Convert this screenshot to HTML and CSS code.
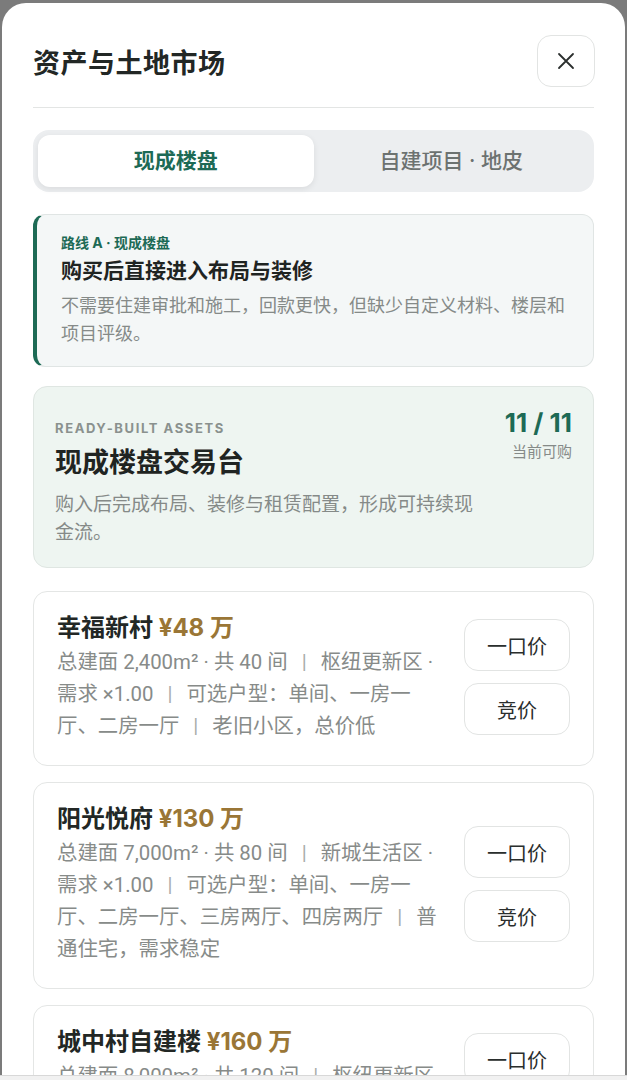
FILE: index.html
```html
<!DOCTYPE html>
<html lang="zh-CN">
<head>
  <meta charset="UTF-8">
  <title>资产与土地市场</title>
  <link rel="stylesheet" href="styles.css">
</head>
<body>

  <div class="sheet">
    <div class="header">
      <h1>资产与土地市场</h1>
      <button class="close" aria-label="关闭">
        <svg width="18" height="18" viewBox="0 0 18 18" fill="none" stroke="#2b2f2e" stroke-width="1.8" stroke-linecap="round">
          <path d="M2 2 L16 16 M16 2 L2 16"/>
        </svg>
      </button>
    </div>

    <div class="tabs">
      <div class="tab active">现成楼盘</div>
      <div class="tab">自建项目 · 地皮</div>
    </div>

    <div class="route">
      <div class="route-label">路线 A · 现成楼盘</div>
      <div class="route-title">购买后直接进入布局与装修</div>
      <p class="route-desc">不需要住建审批和施工，回款更快，但缺少自定义材料、楼层和项目评级。</p>
    </div>

    <div class="desk">
      <div class="desk-main">
        <div class="eyebrow">READY-BUILT ASSETS</div>
        <div class="desk-title">现成楼盘交易台</div>
        <p class="desk-desc">购入后完成布局、装修与租赁配置，形成可持续现金流。</p>
      </div>
      <div class="desk-count">
        <div class="count">11 / 11</div>
        <div class="count-label">当前可购</div>
      </div>
    </div>

    <div class="list">
      <div class="item">
        <div class="item-info">
          <div class="item-name">幸福新村 <span class="price">¥48 万</span></div>
          <p class="item-desc">总建面 2,400m² · 共 40 间<span class="sep">|</span>枢纽更新区 · 需求 ×1.00<span class="sep">|</span>可选户型：单间、一房一厅、二房一厅<span class="sep">|</span>老旧小区，总价低</p>
        </div>
        <div class="item-actions">
          <button class="btn">一口价</button>
          <button class="btn">竞价</button>
        </div>
      </div>

      <div class="item">
        <div class="item-info">
          <div class="item-name">阳光悦府 <span class="price">¥130 万</span></div>
          <p class="item-desc">总建面 7,000m² · 共 80 间<span class="sep">|</span>新城生活区 · 需求 ×1.00<span class="sep">|</span>可选户型：单间、一房一厅、二房一厅、三房两厅、四房两厅<span class="sep">|</span>普通住宅，需求稳定</p>
        </div>
        <div class="item-actions">
          <button class="btn">一口价</button>
          <button class="btn">竞价</button>
        </div>
      </div>

      <div class="item">
        <div class="item-info">
          <div class="item-name">城中村自建楼 <span class="price">¥160 万</span></div>
          <p class="item-desc">总建面 8,000m² · 共 120 间<span class="sep">|</span>枢纽更新区 · 需求 ×1.00<span class="sep">|</span>可选户型：单间、一房一厅<span class="sep">|</span>租金便宜，空置率低</p>
        </div>
        <div class="item-actions">
          <button class="btn">一口价</button>
          <button class="btn">竞价</button>
        </div>
      </div>
    </div>
  </div>

  <div class="bottom-bar"></div>

</body>
</html>
```

FILE: styles.css
```css
html, body {
  margin: 0;
  padding: 0;
  height: 100%;
  overflow: hidden;
}

body {
  background-color: #7b7b7b;
  font-family: Inter, "Noto Sans CJK SC", sans-serif;
  color: #1f2422;
}

.sheet {
  margin: 3px 2px 0;
  padding: 0 31px 40px;
  background-color: white;
  border-radius: 24px 24px 0 0;
  min-height: 1100px;
}

.header {
  display: flex;
  align-items: center;
  justify-content: space-between;
  padding-top: 32px;
  padding-bottom: 20px;
  border-bottom: 1px solid #e3e5e4;
}

h1 {
  margin: 0;
  font-size: 27px;
  font-weight: 700;
  letter-spacing: 0.5px;
  color: #222725;
}

.close {
  width: 58px;
  height: 52px;
  margin-right: -1px;
  border: 1px solid #e2e4e3;
  border-radius: 14px;
  background-color: white;
  display: flex;
  align-items: center;
  justify-content: center;
  padding: 0;
}

.tabs {
  display: flex;
  margin-top: 22px;
  padding: 5px;
  background-color: #eceef0;
  border-radius: 16px;
}

.tab {
  flex: 1;
  height: 52px;
  line-height: 52px;
  text-align: center;
  font-size: 21px;
  font-weight: 500;
  color: #6c7270;
  border-radius: 12px;
}

.tab.active {
  background-color: white;
  color: #1d6a55;
  font-weight: 700;
  box-shadow: 0 2px 6px rgba(0,0,0,0.08);
}

.route {
  margin-top: 22px;
  padding: 18px 20px 20px 24px;
  background-color: #f4f7f7;
  border: 1px solid #e0e5e4;
  border-left: 4px solid #1d6a55;
  border-radius: 12px;
}

.route-label {
  font-size: 14px;
  line-height: 20px;
  font-weight: 700;
  color: #1d6a55;
}

.route-title {
  font-size: 21px;
  line-height: 32px;
  font-weight: 700;
  margin-top: 2px;
}

.route-desc {
  margin: 3px 0 0;
  font-family: "Noto Sans CJK SC", sans-serif;
  font-size: 18px;
  line-height: 28px;
  color: #858a88;
}

.desk {
  display: flex;
  justify-content: space-between;
  margin-top: 19px;
  padding: 20px 21px 22px;
  background-color: #eef5f1;
  border: 1px solid #dfe6e2;
  border-radius: 14px;
}

.desk-main {
  padding-top: 11px;
  max-width: 430px;
}

.eyebrow {
  font-size: 13px;
  line-height: 20px;
  font-weight: 700;
  letter-spacing: 1.6px;
  color: #8a918e;
}

.desk-title {
  font-size: 27px;
  line-height: 36px;
  font-weight: 700;
  margin-top: 7px;
}

.desk-desc {
  margin: 8px 0 0;
  font-family: "Noto Sans CJK SC", sans-serif;
  font-size: 19px;
  line-height: 28px;
  color: #858a88;
}

.desk-count {
  text-align: right;
}

.count {
  font-size: 26px;
  line-height: 32px;
  font-weight: 700;
  color: #1d6a55;
}

.count-label {
  font-size: 15px;
  line-height: 22px;
  color: #858a88;
  margin-top: 2px;
}

.list {
  display: flex;
  flex-direction: column;
  gap: 16px;
  margin-top: 23px;
}

.item {
  display: flex;
  align-items: center;
  gap: 24px;
  padding: 20px 23px 23px;
  border: 1px solid #e4e6e5;
  border-radius: 14px;
  background-color: white;
}

.item-info {
  flex: 1;
}

.item-name {
  font-size: 24px;
  line-height: 32px;
  font-weight: 700;
  color: #222725;
}

.price {
  color: #9a7636;
}

.item-desc {
  margin: 2px 0 0;
  font-family: Roboto, "Noto Sans CJK SC", sans-serif;
  font-size: 20.4px;
  line-height: 32px;
  color: #878b89;
}

.sep {
  margin: 0 14px;
  color: #a9adab;
}

.item-actions {
  display: flex;
  flex-direction: column;
  gap: 12px;
}

.btn {
  width: 106px;
  height: 52px;
  border: 1px solid #e2e4e3;
  border-radius: 14px;
  background-color: white;
  font-family: "Noto Sans CJK SC", sans-serif;
  font-size: 20px;
  color: #2a2e2d;
  padding: 0;
}

.bottom-bar {
  position: fixed;
  left: 0;
  right: 0;
  bottom: 0;
  height: 4px;
  background-color: #f1f1f1;
  border-top: 1px solid #d8d8d8;
}
```
